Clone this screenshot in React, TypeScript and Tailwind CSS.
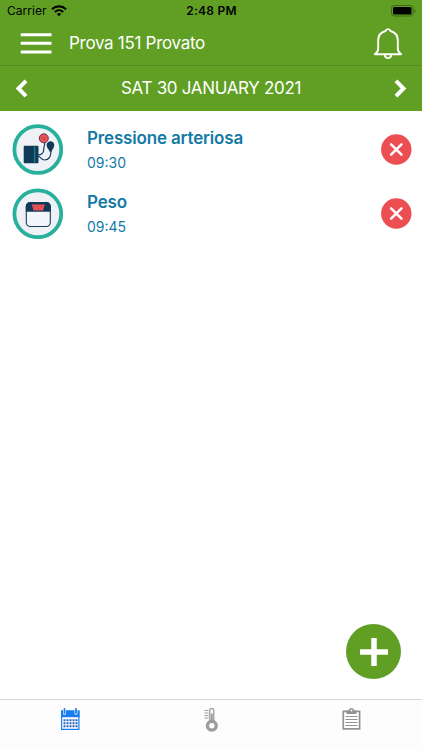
import type { ReactNode } from 'react';

interface Measurement {
  id: string;
  title: string;
  time: string;
  icon: ReactNode;
}

function PressureIcon() {
  return (
    <svg viewBox="0 0 51 51" className="size-[51px]" fill="none" aria-hidden>
      <circle cx="25.8" cy="25.5" r="23.4" fill="#eef2f7" stroke="#29b09d" strokeWidth="3.8" />
      <path
        d="M25.500 31c4.500 0 6.200-2 6.200-5.500 0-3 1.200-4 1.200-7.500M25.500 32c3 0 3.500 4 7 4 4.500 0 6.500-4 6.500-9"
        stroke="#183c5a"
        strokeWidth="1.2"
      />
      <rect x="11.7" y="21.7" width="14.800" height="17.500" rx="1" fill="#103a57" />
      <path d="M22.700 22.500v16" stroke="#168c8d" strokeWidth="1.200" />
      <circle cx="31.800" cy="14.300" r="4.500" fill="#ee5056" stroke="#5b3854" strokeWidth="1" />
      <path d="M29.600 14h4.500M31.100 15.700h1.500" stroke="#a73e50" strokeWidth=".8" />
      <path d="M38.500 17.300c3.600 0 4.600 3.800 3 6.600l-1.600 2.500v1.200h-2.700v-1.200l-1.700-2.500c-1.700-2.800-.5-6.600 3-6.600Z" fill="#103a57" />
    </svg>
  );
}

function ScaleIcon() {
  return (
    <svg viewBox="0 0 51 51" className="size-[51px]" fill="none" aria-hidden>
      <circle cx="25.800" cy="25.800" r="23.400" fill="#eef2f7" stroke="#29b09d" strokeWidth="3.800" />
      <rect x="14.300" y="14.500" width="24" height="24" rx="4" fill="#f2f5fa" stroke="#183c5a" strokeWidth="1.100" />
      <path d="M13.800 23.800v-5.200c0-2.700 2-4.600 4.700-4.600h15.600c2.700 0 4.700 1.900 4.700 4.600v5.200Z" fill="#103a57" />
      <path d="M19.800 16.500h13l-1.700 6h-9.600Z" fill="#ee5056" />
      <path d="M21.500 18.700h2m2 0h1m2 0h2M26.300 20v2.300" stroke="#a73e50" strokeWidth=".7" />
    </svg>
  );
}

const measurements: Measurement[] = [
  { id: 'pressure', title: 'Pressione arteriosa', time: '09:30', icon: <PressureIcon /> },
  { id: 'weight', title: 'Peso', time: '09:45', icon: <ScaleIcon /> },
];

function StatusBar() {
  return (
    <div className="grid h-[22px] grid-cols-[1fr_auto_1fr] items-center pl-[7px] pr-[6px] text-black">
      <div className="flex items-center gap-[4px]">
        <span className="text-[12px] tracking-[0.050px]">Carrier</span>
        <svg viewBox="0 0 16 12" className="h-[12px] w-[16px]" fill="none" stroke="currentColor" aria-hidden>
          <path d="M1 4.200a10.200 10.200 0 0 1 14 0" strokeWidth="2.200" />
          <path d="M3.800 7a6.200 6.200 0 0 1 8.400 0" strokeWidth="2" />
          <path d="m8 11.300-2.200-2.400a3.300 3.300 0 0 1 4.400 0Z" fill="currentColor" stroke="none" />
        </svg>
      </div>
      <span className="text-[12px] font-semibold tracking-[0.250px]">2:48 PM</span>
      <svg viewBox="0 0 25 12" className="h-[12px] w-[25px] justify-self-end" fill="none" aria-hidden>
        <rect x=".5" y=".5" width="21.500" height="10.500" rx="2.800" stroke="#3c6814" />
        <rect x="2" y="2" width="18.500" height="7.500" rx="1.500" fill="#000" />
        <path d="M23.300 4v4c1.600-.6 1.600-3.400 0-4Z" fill="#3c6814" />
      </svg>
    </div>
  );
}

function NavBar() {
  return (
    <div className="flex h-[44px] items-center border-b border-[#548b20] pl-[20px] pr-[19px] text-white">
      <button type="button" aria-label="Menu" className="w-[32px]">
        <svg viewBox="0 0 32 22" className="h-[22px] w-[32px]" stroke="currentColor" strokeWidth="3" aria-hidden>
          <path d="M.7 1.700h30.800M.7 10.300h30.800M.7 19h30.800" />
        </svg>
      </button>
      <h1 className="ml-[17px] flex-1 text-[17px] tracking-[-0.300px]">Prova 151 Provato</h1>
      <button type="button" aria-label="Notifications">
        <svg viewBox="0 0 30 34" className="h-[34px] w-[30px]" fill="none" stroke="currentColor" strokeWidth="1.900" aria-hidden>
          <path d="M12.500 4a2.600 2.600 0 0 1 5 0c4.500 1.200 7.300 4.800 7.300 9.300v8.200c0 2.500 1 4.300 3.400 5.800H1.800c2.400-1.500 3.400-3.300 3.400-5.800v-8.200c0-4.500 2.800-8.100 7.300-9.300Z" strokeLinejoin="round" />
          <path d="M11.700 27.800a3.300 3.300 0 0 0 6.600 0" />
        </svg>
      </button>
    </div>
  );
}

function DateBar() {
  return (
    <div className="flex h-[45px] items-center justify-between px-[15px] text-white">
      <button type="button" aria-label="Previous day">
        <svg viewBox="0 0 13 19" className="h-[19px] w-[13px]" fill="none" stroke="currentColor" strokeWidth="4" aria-hidden>
          <path d="m11 1.900-7.500 7.600 7.500 7.600" />
        </svg>
      </button>
      <span className="text-[17px] tracking-[-0.320px]">SAT 30 JANUARY 2021</span>
      <button type="button" aria-label="Next day">
        <svg viewBox="0 0 13 19" className="h-[19px] w-[13px]" fill="none" stroke="currentColor" strokeWidth="4" aria-hidden>
          <path d="m2 1.900 7.500 7.600L2 17.100" />
        </svg>
      </button>
    </div>
  );
}

function MeasurementRow({ item }: { item: Measurement }) {
  return (
    <li className="flex h-[64.500px] items-center pl-[12px] pr-[10px] text-[#137aa5]">
      {item.icon}
      <div className="ml-[24px] flex-1 pt-[2px]">
        <p className="text-[17px] font-semibold leading-[24px] tracking-[-0.160px]">{item.title}</p>
        <p className="mt-[1px] text-[14px] leading-[24px]">{item.time}</p>
      </div>
      <button type="button" aria-label="Delete">
        <svg viewBox="0 0 31 31" className="size-[31px]" aria-hidden>
          <circle cx="15.300" cy="15.500" r="15.200" fill="#eb4f51" />
          <path d="m10.100 10.300 10.400 10.400m0-10.400L10.100 20.700" stroke="#fff" strokeWidth="2.500" strokeLinecap="round" />
        </svg>
      </button>
    </li>
  );
}

function TabBar() {
  return (
    <nav className="grid h-[51px] grid-cols-3 justify-items-center border-t border-[#d9d9db] bg-[#fdfdfd] pt-[8px]">
      <button type="button" aria-label="Calendar" className="h-[23px]">
        <svg viewBox="0 0 20 23" className="h-[23px] w-[20px]" fill="none" aria-hidden>
          <path d="M1.600 3h17.300v18.400H1.600Z" fill="#fff" stroke="#187cf2" strokeWidth="1.200" />
          <path d="M1 2.500h18.500v6.700H1Z" fill="#187cf2" />
          <path d="M4.500 1.200v4M16 1.200v4" stroke="#fff" strokeWidth="3" strokeLinecap="round" />
          <path d="M4.500 1v4M16 1v4" stroke="#187cf2" strokeWidth="1.800" strokeLinecap="round" />
          <path d="M3.500 12.200h14M3.500 15.200h14M3.500 18.200h14" stroke="#2864ba" strokeWidth="2" strokeDasharray="2 1" />
        </svg>
      </button>
      <button type="button" aria-label="Measurements" className="h-[24px]">
        <svg viewBox="0 0 16 25" className="h-[25px] w-[16px]" fill="none" stroke="#9c9c9c" aria-hidden>
          <path d="M1.500 2.500h4M1.500 5h4M1.500 7.500h4M1.500 10h4" strokeWidth="1.200" />
          <path d="M6.800 14V2.500a2 2 0 0 1 4 0V14" fill="#fff" strokeWidth="1.300" />
          <path d="M8.800 5.500V14" strokeWidth="2" />
          <circle cx="8.800" cy="17.700" r="4.400" fill="#fff" strokeWidth="3.400" />
        </svg>
      </button>
      <button type="button" aria-label="Reports" className="h-[23px]">
        <svg viewBox="0 0 20 23" className="h-[23px] w-[20px]" fill="none" stroke="#929292" aria-hidden>
          <path d="M1.300 3.300h16.300v17.500H1.300Z" fill="#fff" strokeWidth="1.700" />
          <path d="M4.500 2.500H7a2.500 2.500 0 0 1 5 0h2.500V6h-10Z" fill="#929292" stroke="none" />
          <circle cx="9.500" cy="2.500" r=".9" fill="#fff" stroke="none" />
          <path d="M3.500 8.500h12M3.500 11.500h12M3.500 14.500h12M3.500 17.500h12" strokeWidth="1" />
        </svg>
      </button>
    </nav>
  );
}

export default function App() {
  return (
    <div className="flex h-[750px] w-[422px] flex-col overflow-hidden bg-white font-['Inter','Liberation_Sans',sans-serif]">
      <header className="bg-[#609f24]">
        <StatusBar />
        <NavBar />
        <DateBar />
      </header>
      <main className="flex flex-1 flex-col justify-between pt-[6px]">
        <ul>
          {measurements.map((m) => (
            <MeasurementRow key={m.id} item={m} />
          ))}
        </ul>
        <button
          type="button"
          aria-label="Add measurement"
          className="mb-[20px] mr-[21px] flex size-[55px] items-center justify-center self-end rounded-full bg-[#609f24]"
        >
          <svg viewBox="0 0 28 28" className="size-[28px]" stroke="#fff" strokeWidth="5.500" aria-hidden>
            <path d="M14 0v28M0 14h28" />
          </svg>
        </button>
      </main>
      <TabBar />
    </div>
  );
}
